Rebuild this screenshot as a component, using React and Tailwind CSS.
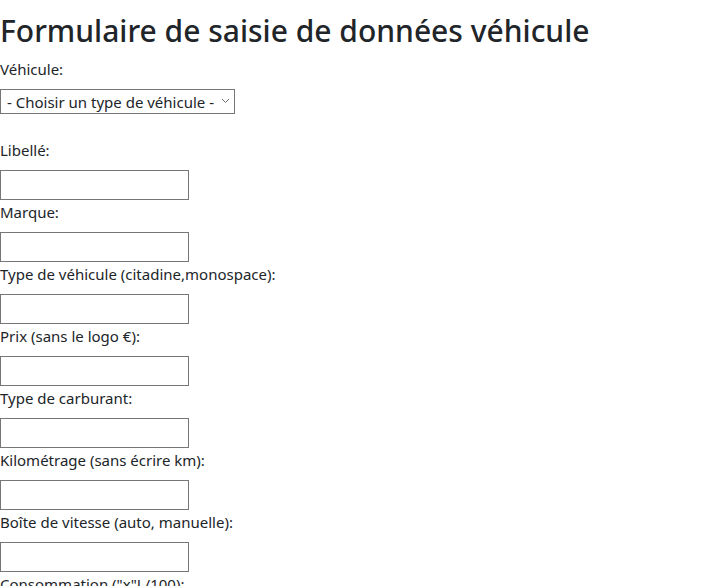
import React from 'react';

const fields = [
  "Libellé:",
  "Marque:",
  "Type de véhicule (citadine,monospace):",
  "Prix (sans le logo €):",
  "Type de carburant:",
  "Kilométrage (sans écrire km):",
  "Boîte de vitesse (auto, manuelle):",
  'Consommation ("x"L/100):',
];

export default function App() {
  return (
    <div className="min-h-screen bg-white text-[#212529] font-['Noto_Sans',sans-serif] text-[15px] leading-6">
      {/* Title */}
      <h1 className="pt-[13px] mb-2 text-[30px] font-medium leading-[36px]">
        Formulaire de saisie de données véhicule
      </h1>

      {/* Vehicle select */}
      <label className="block">Véhicule:</label>
      <div className="relative mt-2 w-[235px]">
        <select className="block h-[25px] w-[235px] appearance-none border border-[#767676] bg-white pl-[6px] text-[15px] leading-5 text-[#212529] font-['Noto_Sans',sans-serif]">
          <option>- Choisir un type de véhicule -</option>
        </select>
        <svg
          className="pointer-events-none absolute right-[5px] top-[9px]"
          width="9"
          height="6"
          viewBox="0 0 9 6"
          fill="none"
        >
          <path d="M1 1l3.5 3.5L8 1" stroke="#6b6b6b" strokeWidth="1" />
        </svg>
      </div>

      {/* Fields */}
      <div className="mt-[24px] flex flex-col">
        {fields.map((f) => (
          <div key={f} className="flex flex-col items-start">
            <label className="block">{f}</label>
            <input
              type="text"
              className="mt-2 h-[30px] w-[189px] border border-[#767676] bg-white"
            />
          </div>
        ))}
      </div>
    </div>
  );
}
